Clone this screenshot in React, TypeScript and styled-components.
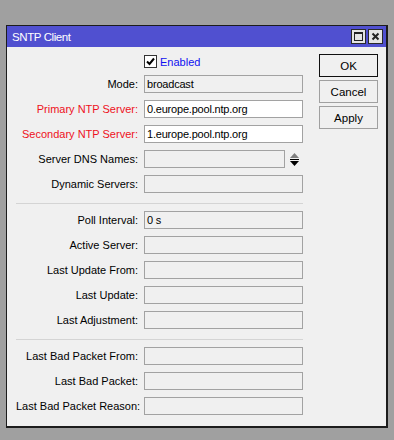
import styled, { createGlobalStyle } from 'styled-components'

const GlobalStyle = createGlobalStyle`
  html, body {
    margin: 0;
    background: #a0a0a0;
  }
  body {
    font-family: "Liberation Sans", Arial, sans-serif;
    font-size: 11px;
  }
`

const Desktop = styled.div`
  width: 394px;
  height: 440px;
  padding: 25px 0 0 6px;
  box-sizing: border-box;
`

const Window = styled.div`
  width: 382px;
  box-sizing: border-box;
  border: 1px solid #1c1c1c;
  border-right-width: 2px;
  border-bottom-width: 2px;
  background: #f0f0f0;
`

const TitleBar = styled.div`
  height: 21px;
  background: #5050d0;
  color: #ffffff;
  display: flex;
  align-items: center;
  padding: 0 3px 0 5px;
  font-size: 11.5px;
`

const Title = styled.span`
  flex: 1;
  letter-spacing: -0.4px;
`

const TitleButtons = styled.div`
  display: flex;
  gap: 2px;
`

const TitleButton = styled.div`
  width: 15px;
  height: 15px;
  box-sizing: border-box;
  border: 1px solid #2a2a2a;
  background: #e4e4e4;
  display: flex;
  align-items: center;
  justify-content: center;
`

const Body = styled.div`
  display: flex;
  padding: 7px 9px 11px 9px;
  gap: 16px;
`

const Form = styled.div`
  display: flex;
  flex-direction: column;
  gap: 7px;
  padding-top: 1px;
`

const Row = styled.div`
  display: grid;
  grid-template-columns: 122px 159px;
  column-gap: 6px;
  align-items: center;
  height: 18px;
`

const CheckRow = styled.div`
  display: grid;
  grid-template-columns: 122px auto;
  column-gap: 6px;
  align-items: center;
  height: 13px;
`

const Label = styled.label<{ $required?: boolean }>`
  text-align: right;
  white-space: nowrap;
  color: ${p => (p.$required ? '#ee1122' : '#000000')};
`

const Field = styled.div<{ $editable?: boolean }>`
  height: 18px;
  box-sizing: border-box;
  border: 1px solid #a2a2a2;
  background: ${p => (p.$editable ? '#ffffff' : '#f0f0f0')};
  padding: 0 2px;
  display: flex;
  align-items: center;
  color: #000000;
  font-size: 11px;
  letter-spacing: -0.2px;
  white-space: nowrap;
  overflow: hidden;
`

const FieldWithSpin = styled.div`
  display: flex;
  align-items: center;
  gap: 5px;
`

const Separator = styled.div`
  height: 1px;
  margin-top: 3px;
  background: #d4d4d4;
  width: 287px;
`

const Check = styled.div`
  display: flex;
  align-items: center;
  gap: 3px;
  color: #1010f0;
  font-size: 11px;
`

const Box = styled.div`
  width: 13px;
  height: 13px;
  box-sizing: border-box;
  border: 1px solid #333333;
  background: #ffffff;
  display: flex;
  align-items: center;
  justify-content: center;
`

const Buttons = styled.div`
  display: flex;
  flex-direction: column;
  gap: 3px;
`

const Button = styled.div<{ $default?: boolean }>`
  width: 59px;
  height: 23px;
  box-sizing: border-box;
  border: 1px solid ${p => (p.$default ? '#101010' : '#a0a0a0')};
  background: #f0f0f0;
  display: flex;
  align-items: center;
  justify-content: center;
  color: #000000;
  font-size: 11.5px;
`

const top = [
  { label: 'Mode:', value: 'broadcast' },
  { label: 'Primary NTP Server:', value: '0.europe.pool.ntp.org', required: true, editable: true },
  { label: 'Secondary NTP Server:', value: '1.europe.pool.ntp.org', required: true, editable: true },
]

const middle = ['Poll Interval:', 'Active Server:', 'Last Update From:', 'Last Update:', 'Last Adjustment:']
const bottom = ['Last Bad Packet From:', 'Last Bad Packet:', 'Last Bad Packet Reason:']

export default function App() {
  return (
    <Desktop>
      <GlobalStyle />
      <Window>
        <TitleBar>
          <Title>SNTP Client</Title>
          <TitleButtons>
            <TitleButton>
              <svg width="11" height="11" viewBox="0 0 11 11">
                <rect x="1.5" y="1.5" width="8" height="8" fill="none" stroke="#222" />
                <rect x="1" y="1" width="9" height="2" fill="#222" />
              </svg>
            </TitleButton>
            <TitleButton>
              <svg width="11" height="11" viewBox="0 0 11 11">
                <path d="M2.5 2.5 L8.5 8.5 M8.5 2.5 L2.5 8.5" stroke="#222" strokeWidth="2" />
              </svg>
            </TitleButton>
          </TitleButtons>
        </TitleBar>
        <Body>
          <Form>
            <CheckRow>
              <span />
              <Check>
                <Box>
                  <svg width="9" height="9" viewBox="0 0 9 9">
                    <path d="M1 4.5 L3.5 7 L8 1.5" fill="none" stroke="#000" strokeWidth="2" />
                  </svg>
                </Box>
                Enabled
              </Check>
            </CheckRow>
            {top.map(r => (
              <Row key={r.label}>
                <Label $required={r.required}>{r.label}</Label>
                <Field $editable={r.editable}>{r.value}</Field>
              </Row>
            ))}
            <Row>
              <Label>Server DNS Names:</Label>
              <FieldWithSpin>
                <Field style={{ width: 141 }} />
                <svg width="9" height="13" viewBox="0 0 9 13">
                  <path d="M4.5 0 L9 5 L0 5 Z" fill="#808080" />
                  <rect x="0" y="6" width="9" height="1" fill="#000" />
                  <path d="M0 8 L9 8 L4.5 13 Z" fill="#000" />
                </svg>
              </FieldWithSpin>
            </Row>
            <Row>
              <Label>Dynamic Servers:</Label>
              <Field />
            </Row>
            <Separator />
            {middle.map((l, i) => (
              <Row key={l}>
                <Label>{l}</Label>
                <Field>{i === 0 ? '0 s' : ''}</Field>
              </Row>
            ))}
            <Separator />
            {bottom.map(l => (
              <Row key={l}>
                <Label>{l}</Label>
                <Field />
              </Row>
            ))}
          </Form>
          <Buttons>
            <Button $default>OK</Button>
            <Button>Cancel</Button>
            <Button>Apply</Button>
          </Buttons>
        </Body>
      </Window>
    </Desktop>
  )
}
